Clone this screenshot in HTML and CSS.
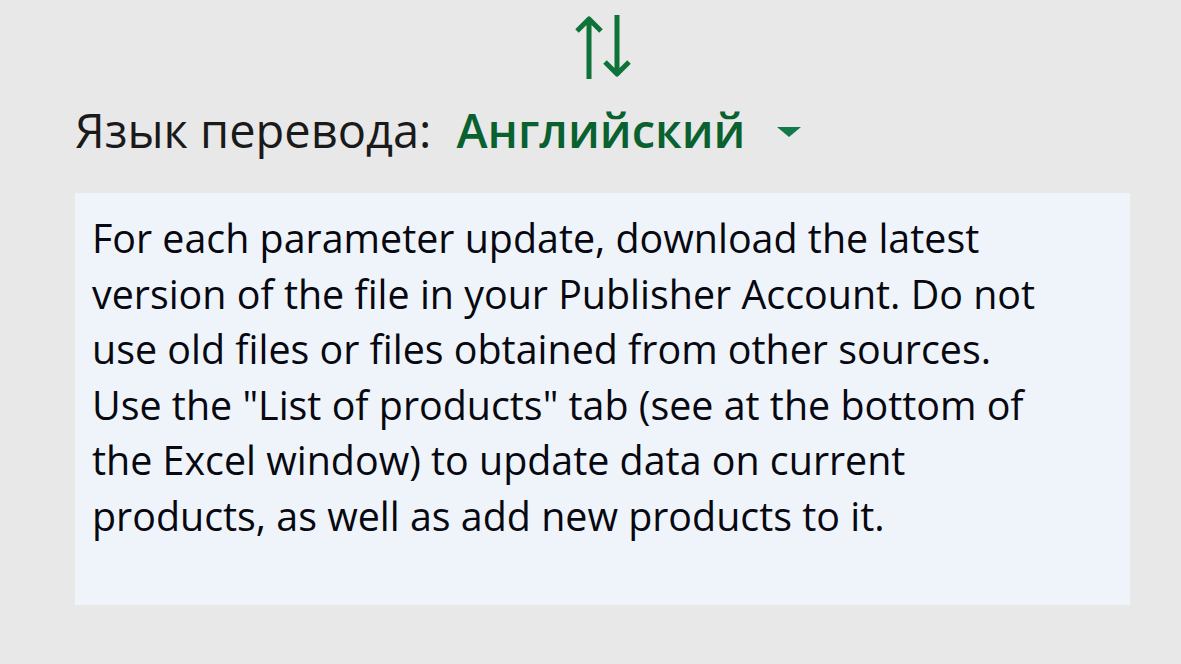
FILE: index.html
```html
<!DOCTYPE html>
<html lang="ru">
<head>
    <meta charset="UTF-8">
    <meta name="viewport" content="width=device-width, initial-scale=1.0">
    <title>Перевод</title>
    <link rel="stylesheet" href="styles.css">
</head>
<body>
    <div class="swap">
        <svg width="58" height="66" viewBox="0 0 58 66">
            <path d="M15 65 V5 M3 17 L15 5 L27 17" fill="none" stroke="#0d7338" stroke-width="5" stroke-linejoin="round"/>
            <path d="M43 1 V60 M31 48 L43 60 L55 48" fill="none" stroke="#0d7338" stroke-width="5" stroke-linejoin="round"/>
        </svg>
    </div>
    <div class="lang">
        <span class="label">Язык перевода:</span>
        <span class="value">Английский</span>
        <span class="caret"></span>
    </div>
    <div class="result">
        For each parameter update, download the latest<br>
        version of the file in your Publisher Account. Do not<br>
        use old files or files obtained from other sources.<br>
        Use the "List of products" tab (see at the bottom of<br>
        the Excel window) to update data on current<br>
        products, as well as add new products to it.
    </div>
</body>
</html>
```

FILE: styles.css
```css
body {
    font-family: "Open Sans", "Noto Sans", sans-serif;
    background-color: #e8e8e8;
    color: #111;
    margin: 0;
    padding: 14px 51px 0 75px;
}
.swap {
    display: flex;
    justify-content: center;
}
.swap svg {
    display: block;
}
.lang {
    display: flex;
    align-items: center;
    gap: 26px;
    margin-top: 18px;
    font-size: 47px;
    line-height: 64px;
    color: #1a1a1a;
}
.value {
    color: #0a6130;
    font-weight: 600;
    margin-left: -1px;
}
.caret {
    width: 0;
    height: 0;
    border-left: 12px solid transparent;
    border-right: 12px solid transparent;
    border-top: 10px solid #127a48;
    margin-left: 6px;
    margin-top: 4px;
}
.result {
    margin-top: 31px;
    background: #eff4fb;
    height: 412px;
    box-sizing: border-box;
    padding: 18px 17px;
    font-size: 39.4px;
    line-height: 55.5px;
    color: #080810;
}
```
